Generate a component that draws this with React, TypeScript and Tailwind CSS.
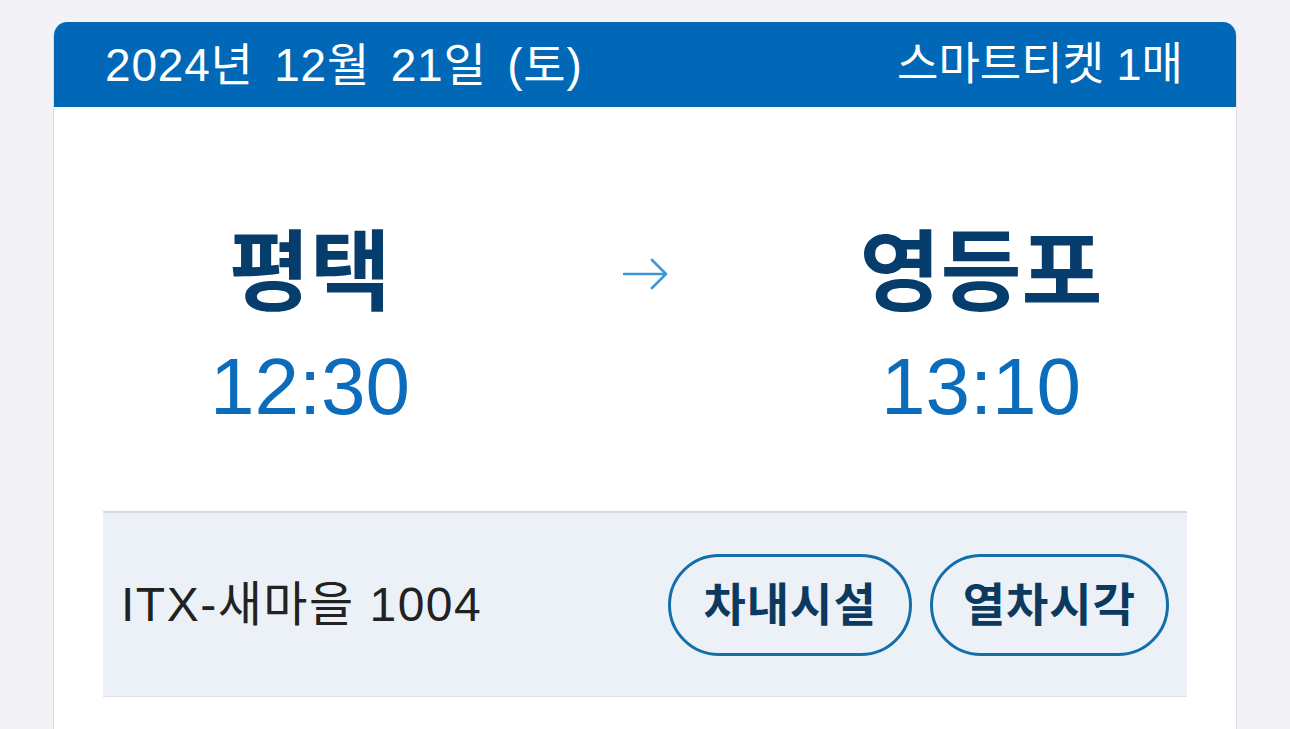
import React from "react";

const font = { fontFamily: '"Liberation Sans", "Noto Sans CJK KR", sans-serif' };

export default function App() {
  return (
    <div
      className="w-full h-[729px] overflow-hidden bg-[#f2f2f7] pt-[22px] px-[53px]"
      style={font}
    >
      <div className="rounded-t-[14px] overflow-hidden bg-white border-x border-[#dcdce1] h-[720px]">
        <div className="h-[85px] bg-[#0068b7] flex items-center justify-between pl-[51px] pr-[53px] text-white text-[46px] leading-none">
          <span className="[word-spacing:7px] tracking-[0.8px]">2024년 12월 21일 (토)</span>
          <span className="text-[45px]">스마트티켓 1매</span>
        </div>

        <div className="flex justify-center pt-[122px]">
          <div className="w-[300px] flex flex-col items-center">
            <div className="text-[88px] leading-none font-bold text-[#073d6c]">평택</div>
            <div className="mt-[30px] text-[80px] leading-none text-[#0a6cba]">12:30</div>
          </div>
          <div className="w-[372px] flex justify-center pt-[28px]">
            <svg width="46" height="34" viewBox="0 0 46 34" fill="none">
              <path
                d="M1 17 H43 M29 3 L43 17 L29 31"
                stroke="#3b98d6"
                strokeWidth="2.6"
                strokeLinecap="round"
                strokeLinejoin="round"
              />
            </svg>
          </div>
          <div className="w-[298px] flex flex-col items-center">
            <div className="text-[88px] leading-none font-bold text-[#073d6c]">영등포</div>
            <div className="mt-[30px] text-[80px] leading-none text-[#0a6cba]">13:10</div>
          </div>
        </div>

        <div className="mx-[49px] mt-[84px] h-[186px] bg-[#ecf1f8] border-t-2 border-t-[#d5d8de] border-b border-b-[#dde0e5] flex items-center justify-between pl-[18px] pr-[18px]">
          <span className="text-[48px] leading-none text-[#222] tracking-[1.5px]">ITX-새마을 1004</span>
          <div className="flex gap-[18px]">
            <button className="h-[102px] px-[32px] rounded-full border-[3px] border-[#146ea8] text-[46px] leading-none font-bold text-[#0b3a5e] tracking-[1px]">
              차내시설
            </button>
            <button className="h-[102px] px-[30px] rounded-full border-[3px] border-[#146ea8] text-[46px] leading-none font-bold text-[#0b3a5e] tracking-[1px]">
              열차시각
            </button>
          </div>
        </div>
      </div>
    </div>
  );
}
